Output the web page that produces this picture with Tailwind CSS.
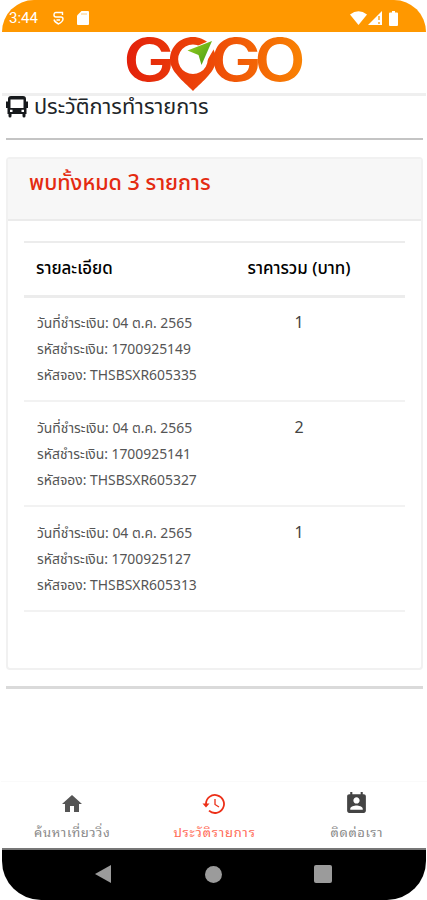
<!DOCTYPE html>
<html lang="th">
<head>
  <meta charset="UTF-8" />
  <meta name="viewport" content="width=device-width, initial-scale=1" />
  <title>ประวัติการทำรายการ</title>
  <script src="https://cdn.jsdelivr.net/npm/@tailwindcss/browser@4"></script>
</head>
<body class="bg-white font-['Noto_Sans','Noto_Sans_Thai',sans-serif] text-[#212529]">
  <div class="flex flex-col w-[427px] h-[900px] pl-[2px] pr-px overflow-hidden">

    <!-- Status bar -->
    <div class="flex items-center justify-between h-[32px] shrink-0 bg-[#ff9800] rounded-t-[37px] pl-[7px] pr-[27px] pt-[4px] text-white">
      <div class="flex items-center">
        <span class="font-[Roboto] text-[15px] leading-none w-[44px] whitespace-nowrap">3:44</span>
        <svg class="w-[11px] h-[14px]" viewBox="0 0 11 14" fill="none" stroke="#fff" stroke-width="1.4">
          <path d="M9.5 4V1.5H3Q1 1.500 1 4Q1 6 3 6H8Q10 6 10 8Q10 10.500 5.500 13Q1.500 11 1 8.500M3.500 9H7" />
        </svg>
        <svg class="w-[12px] h-[14px] ml-[13px]" viewBox="0 0 12 14" fill="#fff">
          <path d="M4.500 0H11Q12 0 12 1V13Q12 14 11 14H1Q0 14 0 13V4.500Z" />
          <path d="M5 2V4M7 2V4M9 2V4" stroke="#ffc978" />
        </svg>
      </div>
      <div class="flex items-center">
        <svg class="w-[17px] h-[14px]" viewBox="0 0 17 14" fill="#fff"><path d="M0 3.500Q8.500 -3 17 3.500L8.500 14Z" /></svg>
        <svg class="w-[14px] h-[14px] ml-[1px]" viewBox="0 0 14 14" fill="#fff"><path d="M14 0V14H0Z" /><path d="M11 5V9M11 11V13" stroke="#ff9800" stroke-width="1.300" /></svg>
        <svg class="w-[9px] h-[15px] ml-[7px] mr-[1px]" viewBox="0 0 9 15" fill="#fff"><path d="M3 0H6V1.500H8Q9 1.500 9 2.500V14Q9 15 8 15H1Q0 15 0 14V2.500Q0 1.500 1 1.500H3Z" /></svg>
      </div>
    </div>

    <!-- Logo -->
    <header class="h-[64px] shrink-0 flex justify-center border-b-[3px] border-[#efefef]">
      <svg class="w-[180px] h-[60px] overflow-visible" viewBox="124 32 180 60">
        <defs>
          <linearGradient id="brand" gradientUnits="userSpaceOnUse" x1="126" y1="0" x2="302" y2="0">
            <stop offset="0" stop-color="#e3200b" />
            <stop offset="0.5" stop-color="#ee4b08" />
            <stop offset="1" stop-color="#f98203" />
          </linearGradient>
          <linearGradient id="arrow" x1="0" y1="0" x2="1" y2="1">
            <stop offset="0" stop-color="#9ad01c" />
            <stop offset="1" stop-color="#429a16" />
          </linearGradient>
        </defs>
        <g fill="url(#brand)" font-family="Inter, sans-serif" font-weight="600" font-size="59">
          <text x="123.500" y="81" textLength="51" lengthAdjust="spacingAndGlyphs">G</text>
          <text x="210.500" y="81" textLength="51" lengthAdjust="spacingAndGlyphs">G</text>
          <text x="254.500" y="81" textLength="51" lengthAdjust="spacingAndGlyphs">O</text>
        </g>
        <path fill="url(#brand)" fill-rule="evenodd" d="M193 37C180 37 170 47 170 59.500C170 71 183 81 193 91C203 81 216 71 216 59.500C216 47 205 37 193 37ZM193 44.500A14.800 14.800 0 1 1 192.900 44.500Z" />
        <path fill="#fff" d="M186 51L204 43L213.500 39L215 47L204 66L199 66L193 59Z" />
        <path fill="url(#arrow)" d="M187.500 50.500L212 41L201.500 65L198.500 55Z" />
      </svg>
    </header>

    <main class="flex flex-col h-[685px] shrink-0 pl-[4px] pr-[3px]">
      <div class="flex items-center h-[42px] pb-[21px] shrink-0">
        <svg class="w-[22px] h-[22px] shrink-0" viewBox="0 0 22 22">
          <path fill="#16191c" fill-rule="evenodd" d="M5 0H17Q20 0 20 3V5.500H22V12H20.500V18H19.500V20Q19.500 21.500 18 21.500Q16.500 21.500 16.500 20V18H5.500V20Q5.500 21.500 4 21.500Q2.500 21.500 2.500 20V18H1.500V12H0V5.500H2V3Q2 0 5 0ZM4.500 3.500V12H17.500V3.500ZM4 13.800V16H6.500V13.800ZM15.500 13.800V16H18V13.800Z" />
        </svg>
        <h1 class="ml-[6px] -mt-[2px] text-[21.7px] leading-none whitespace-nowrap">ประวัติการทำรายการ</h1>
      </div>
      <hr class="border-0 h-[2px] shrink-0 bg-[#c4c4c4]" />

      <section class="mt-[17px] h-[513px] shrink-0 border-2 border-[#f1f1f1] rounded-[4px]">
        <div class="h-[62px] px-[21px] pt-[7px] bg-[#f7f7f7] border-b-2 border-[#ebebeb]">
          <h2 class="text-[21.5px] leading-[32px] font-medium text-[#e42b11] whitespace-nowrap">พบทั้งหมด 3 รายการ</h2>
        </div>
        <div class="px-[16px] pt-[20px]">
          <table class="w-[381px] table-fixed border-collapse">
            <thead>
              <tr class="h-[54px] border-t-2 border-b-3 border-[#ececec] text-[16.9px] text-black">
                <th class="w-[169px] pl-[12px] pb-[2px] text-left font-medium">รายละเอียด</th>
                <th class="pb-[2px] text-center font-medium">ราคารวม (บาท)</th>
              </tr>
            </thead>
            <tbody class="text-[13.9px] leading-[26px] text-[#555] align-top">
              <tr class="h-[105px] border-b-2 border-[#f2f2f2]">
                <td class="pl-[13px] pt-[12px] whitespace-nowrap">วันที่ชำระเงิน: 04 ต.ค. 2565<br />รหัสชำระเงิน: 1700925149<br />รหัสจอง: THSBSXR605335</td>
                <td class="pt-[11px] text-center text-[16px] text-[#444]">1</td>
              </tr>
              <tr class="h-[105px] border-b-2 border-[#f2f2f2]">
                <td class="pl-[13px] pt-[13px] whitespace-nowrap">วันที่ชำระเงิน: 04 ต.ค. 2565<br />รหัสชำระเงิน: 1700925141<br />รหัสจอง: THSBSXR605327</td>
                <td class="pt-[12px] text-center text-[16px] text-[#444]">2</td>
              </tr>
              <tr class="h-[105px] border-b-2 border-[#f2f2f2]">
                <td class="pl-[13px] pt-[13px] whitespace-nowrap">วันที่ชำระเงิน: 04 ต.ค. 2565<br />รหัสชำระเงิน: 1700925127<br />รหัสจอง: THSBSXR605313</td>
                <td class="pt-[12px] text-center text-[16px] text-[#444]">1</td>
              </tr>
            </tbody>
          </table>
        </div>
      </section>
      <hr class="mt-[16px] border-0 h-[3px] shrink-0 bg-[#dadada]" />
    </main>

    <!-- Tabs -->
    <nav class="grid grid-cols-3 h-[67px] -ml-[1px] -mr-[2px] shrink-0 border-t border-[#fafafa] font-['Noto_Sans_Thai_Looped','Noto_Looped_Thai','Loma','Noto_Sans_Thai',sans-serif] text-[13px] text-[#888]">
      <a class="flex flex-col items-center pt-[10px]">
        <svg class="w-[24px] h-[24px]" viewBox="0 0 24 24" fill="#555"><path d="M10 20v-6h4v6h5v-8h3L12 3 2 12h3v8z" /></svg>
        <span class="mt-[6px] leading-[20px] tracking-[0.6px] whitespace-nowrap">ค้นหาเที่ยววิ่ง</span>
      </a>
      <a class="flex flex-col items-center pt-[10px] text-[#ff6a55]">
        <svg class="w-[24px] h-[24px]" viewBox="0 0 24 24" fill="none" stroke="#ec2f17" stroke-width="1.800">
          <path d="M4 12A9 9 0 1 1 7 18.700" /><path d="M13 7V12.500L17 15" stroke-width="1.300" /><path d="M0.500 11.500H7.500L4 15.500Z" fill="#ec2f17" stroke="none" />
        </svg>
        <span class="mt-[6px] leading-[20px] tracking-[0.8px] whitespace-nowrap">ประวัติรายการ</span>
      </a>
      <a class="flex flex-col items-center pt-[9px]">
        <svg class="w-[25px] h-[25px]" viewBox="0 0 24 24" fill="#444"><path d="M19 3h-1V1h-2v2H8V1H6v2H5c-1.110 0-2 .9-2 2v14c0 1.100.89 2 2 2h14c1.100 0 2-.9 2-2V5c0-1.100-.9-2-2-2zm-7 3c1.660 0 3 1.340 3 3s-1.340 3-3 3-3-1.340-3-3 1.340-3 3-3zm6 12H6v-1c0-2 4-3.100 6-3.100s6 1.100 6 3.100v1z" /></svg>
        <span class="mt-[6px] leading-[20px] tracking-[0.6px] whitespace-nowrap">ติดต่อเรา</span>
      </a>
    </nav>

    <!-- System buttons -->
    <div class="grid grid-cols-3 items-center justify-items-center h-[52px] shrink-0 bg-black rounded-b-[39px] border-t-2 border-[#777] pb-[2px]">
      <svg class="w-[16px] h-[18px] ml-[60px]" viewBox="0 0 16 18" fill="#9b9b9b"><path d="M16 0V18L0 9Z" /></svg>
      <div class="size-[17px] rounded-full bg-[#9b9b9b]"></div>
      <div class="size-[18px] rounded-[2px] bg-[#9b9b9b] mr-[64px]"></div>
    </div>
  </div>
</body>
</html>
